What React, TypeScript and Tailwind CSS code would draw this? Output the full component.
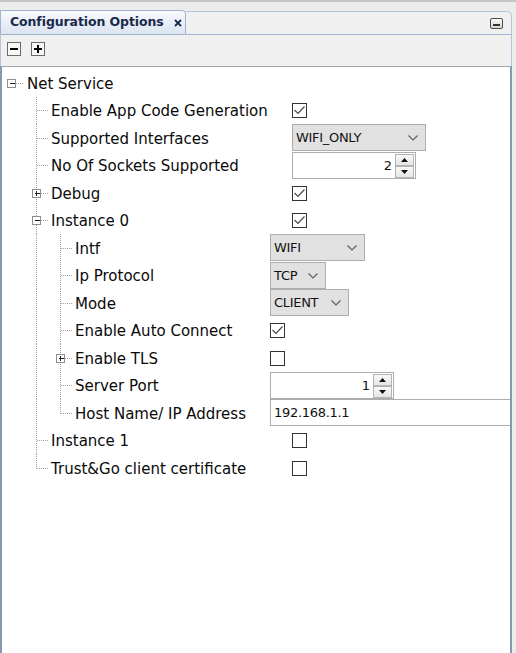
import React from 'react';

type Exp = 'plus' | 'minus' | undefined;

function Guide({ w, h, x, vert, hFrom, exp }: { w: number; h: number; x: number; vert?: 'full' | 'top'; hFrom?: number; exp?: Exp }) {
  const cy = h === 28 ? 14.5 : 13.5;
  const bx = x - 4;
  return (
    <svg width={w} height={h} className="block shrink-0" shapeRendering="crispEdges">
      {vert && <line x1={x} y1={0} x2={x} y2={vert === 'full' ? h : cy} stroke="#a3a3a3" strokeDasharray="1 1" />}
      {hFrom !== undefined && <line x1={hFrom} y1={cy} x2={w} y2={cy} stroke="#a3a3a3" strokeDasharray="1 1" />}
      {exp && (
        <g>
          <rect x={bx} y={cy - 4} width={8} height={8} fill="#ffffff" stroke="#8f8f8f" />
          <line x1={bx + 2} y1={cy} x2={bx + 7} y2={cy} stroke="#222" />
          {exp === 'plus' && <line x1={x} y1={cy - 2.5} x2={x} y2={cy + 2.5} stroke="#222" />}
        </g>
      )}
    </svg>
  );
}

function Chevron() {
  return (
    <svg width="10" height="6" viewBox="0 0 10 6" className="block">
      <path d="M0.5 0.5 L5 5 L9.5 0.5" fill="none" stroke="#5c5c5c" strokeWidth="1.1" />
    </svg>
  );
}

function Combo({ text, w }: { text: string; w: string }) {
  return (
    <div className={`${w} h-[27px] self-start shrink-0 flex items-center justify-between border border-[#adadad] bg-[#e1e1e1] pl-[3px] pr-[7px] text-[13px] text-[#111111] tracking-[-0.3px] font-['DejaVu_Sans',sans-serif]`}>
      <span className="whitespace-nowrap">{text}</span>
      <Chevron />
    </div>
  );
}

function SpinBtn({ up }: { up?: boolean }) {
  return (
    <div className="flex-1 border border-[#b4b4b4] bg-gradient-to-b from-[#f8f8f8] to-[#e6e6e6] flex items-center justify-center">
      <svg width="7" height="4" viewBox="0 0 7 4" className="block">
        {up ? <path d="M0 4 L3.5 0 L7 4 Z" fill="#111" /> : <path d="M0 0 L3.5 4 L7 0 Z" fill="#111" />}
      </svg>
    </div>
  );
}

function Spinner({ value, w }: { value: string; w: string }) {
  return (
    <div className={`${w} h-[27px] self-start shrink-0 flex items-center border border-[#adadad] bg-white pr-[1px]`}>
      <span className="flex-1 text-right pr-[3px] text-[13px] text-[#111111] font-['DejaVu_Sans',sans-serif]">{value}</span>
      <div className="flex flex-col h-[24px] w-[19px]">
        <SpinBtn up />
        <SpinBtn />
      </div>
    </div>
  );
}

function Check({ checked }: { checked?: boolean }) {
  return (
    <div className="w-[15px] h-[15px] shrink-0 border border-[#333333] bg-white flex items-center justify-center">
      {checked && (
        <svg width="13" height="13" viewBox="0 0 13 13" className="block">
          <path d="M1.5 6 L5 9.5 L11.5 2.5" fill="none" stroke="#4a4a4a" strokeWidth="1.2" />
        </svg>
      )}
    </div>
  );
}

function TextField({ value }: { value: string }) {
  return (
    <div className="flex-1 h-[27px] self-start flex items-center border-l border-y border-[#adadad] bg-white pl-[3px] text-[13px] text-[#111111] tracking-[-0.3px] font-['DejaVu_Sans',sans-serif]">
      {value}
    </div>
  );
}

type RowDef = {
  level: 0 | 1 | 2;
  label: string;
  exp?: Exp;
  last?: boolean;
  ctrl?: React.ReactNode;
};

function TreeRow({ idx, r }: { idx: number; r: RowDef }) {
  const h = idx % 2 === 0 ? 28 : 27;
  const cells: React.ReactNode[] = [];
  if (r.level === 0) {
    cells.push(<Guide key="c0" w={22} h={h} x={9.5} hFrom={14} exp={r.exp} />);
  } else {
    cells.push(<svg key="c0" width={22} height={h} className="block shrink-0" />);
    if (r.level === 1) {
      cells.push(<Guide key="c1" w={24} h={h} x={12.5} vert={r.last ? 'top' : 'full'} hFrom={r.exp ? 17 : 13} exp={r.exp} />);
    } else {
      cells.push(<Guide key="c1" w={24} h={h} x={12.5} vert="full" />);
      cells.push(<Guide key="c2" w={24} h={h} x={12.5} vert={r.last ? 'top' : 'full'} hFrom={r.exp ? 17 : 13} exp={r.exp} />);
    }
  }
  const lw = r.level === 1 ? 'w-[244px]' : r.level === 2 ? 'w-[198px]' : '';
  return (
    <div className={`flex items-center ${h === 28 ? 'h-[28px]' : 'h-[27px]'}`}>
      {cells}
      <span className={`pl-[3px] pt-[2px] ${lw} shrink-0 whitespace-nowrap text-[15px] leading-none text-[#0a0a0a] font-['DejaVu_Sans',sans-serif]`}>{r.label}</span>
      {r.ctrl}
    </div>
  );
}

export default function App() {
  const rows: RowDef[] = [
    { level: 0, label: 'Net Service', exp: 'minus' },
    { level: 1, label: 'Enable App Code Generation', ctrl: <Check checked /> },
    { level: 1, label: 'Supported Interfaces', ctrl: <Combo text="WIFI_ONLY" w="w-[134px]" /> },
    { level: 1, label: 'No Of Sockets Supported', ctrl: <Spinner value="2" w="w-[124px]" /> },
    { level: 1, label: 'Debug', exp: 'plus', ctrl: <Check checked /> },
    { level: 1, label: 'Instance 0', exp: 'minus', ctrl: <Check checked /> },
    { level: 2, label: 'Intf', ctrl: <Combo text="WIFI" w="w-[95px]" /> },
    { level: 2, label: 'Ip Protocol', ctrl: <Combo text="TCP" w="w-[56px]" /> },
    { level: 2, label: 'Mode', ctrl: <Combo text="CLIENT" w="w-[79px]" /> },
    { level: 2, label: 'Enable Auto Connect', ctrl: <Check checked /> },
    { level: 2, label: 'Enable TLS', exp: 'plus', ctrl: <Check /> },
    { level: 2, label: 'Server Port', ctrl: <Spinner value="1" w="w-[124px]" /> },
    { level: 2, label: 'Host Name/ IP Address', last: true, ctrl: <TextField value="192.168.1.1" /> },
    { level: 1, label: 'Instance 1', ctrl: <Check /> },
    { level: 1, label: 'Trust&Go client certificate', last: true, ctrl: <Check /> },
  ];

  return (
    <div className="w-[516px] h-[653px] overflow-hidden bg-[#ececec] border-t-2 border-[#c6c6c6] pt-[8px] pr-[4px] flex flex-col">
      {/* header */}
      <div className="h-[25px] shrink-0 flex">
        <div className="w-[186px] h-full shrink-0 flex items-center border border-b border-[#9fb3cc] rounded-tr-[4px] bg-gradient-to-b from-[#f8fafd] to-[#dbe4f1] pl-[9px]">
          <span className="text-[12.5px] font-bold text-[#1b2a4c] font-['DejaVu_Sans',sans-serif] whitespace-nowrap tracking-[-0.1px]">Configuration Options</span>
          <svg width="8" height="8" viewBox="0 0 8 8" className="block ml-[10px] mt-[1px]">
            <path d="M1 1 L7 7 M7 1 L1 7" stroke="#1b2a4c" strokeWidth="1.8" />
          </svg>
        </div>
        <div className="flex-1 mt-[1px] flex items-center justify-end border-t border-r border-b border-[#b4c5da] border-b-[#a3b7d0] rounded-tr-[5px] bg-[#f0f0f0] pr-[8px]">
          <div className="w-[13px] h-[11px] rounded-[2px] border border-[#4d4d4d] bg-gradient-to-b from-[#fafafa] to-[#d4d4d4] flex items-end justify-center pb-[2px]">
            <div className="w-[7px] h-[2px] bg-[#333333]" />
          </div>
        </div>
      </div>
      {/* toolbar */}
      <div className="h-[31px] shrink-0 flex items-start gap-[10px] pt-[7px] pl-[6px] bg-[#f0f0f0] border-l border-r border-[#b4c5da]">
        <div className="w-[14px] h-[14px] border border-[#6a6a6a] bg-[#f7f7f7] flex items-center justify-center">
          <div className="w-[8px] h-[2px] bg-black" />
        </div>
        <div className="w-[14px] h-[14px] border border-[#6a6a6a] bg-[#f7f7f7] flex items-center justify-center">
          <svg width="8" height="8" viewBox="0 0 8 8" className="block">
            <path d="M0 3 H8 V5 H0 Z M3 0 H5 V8 H3 Z" fill="#000" />
          </svg>
        </div>
      </div>
      {/* content */}
      <div className="flex-1 bg-white border-t border-[#a4a4a4] border-l-2 border-r-2 border-l-[#8598b1] border-r-[#8598b1] pt-[2px] flex flex-col">
        {rows.map((r, i) => (
          <TreeRow key={i} idx={i} r={r} />
        ))}
      </div>
    </div>
  );
}
